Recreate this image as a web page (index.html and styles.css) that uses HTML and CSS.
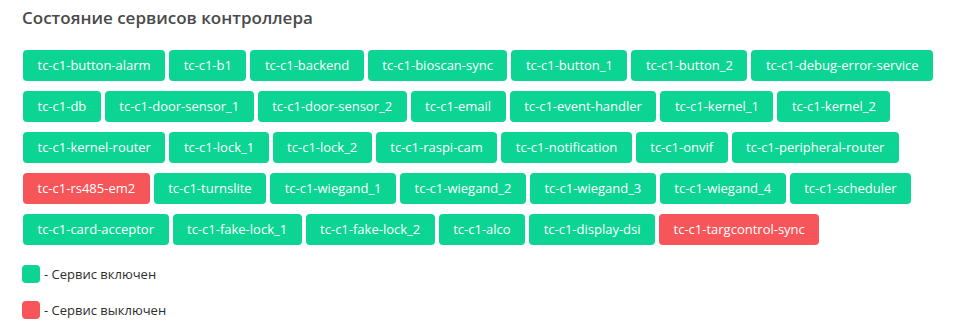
FILE: index.html
```html
<!DOCTYPE html>
<html lang="ru">
<head>
  <meta charset="UTF-8" />
  <meta name="viewport" content="width=device-width, initial-scale=1.0"/>
  <title>Состояние сервисов</title>
  <link rel="stylesheet" href="styles.css">
</head>
<body>

  <div class="panel">
    <h2>Состояние сервисов контроллера</h2>

    <div class="services">
      <span class="svc on">tc-c1-button-alarm</span>
      <span class="svc on">tc-c1-b1</span>
      <span class="svc on">tc-c1-backend</span>
      <span class="svc on">tc-c1-bioscan-sync</span>
      <span class="svc on">tc-c1-button_1</span>
      <span class="svc on">tc-c1-button_2</span>
      <span class="svc on">tc-c1-debug-error-service</span>
      <span class="svc on">tc-c1-db</span>
      <span class="svc on">tc-c1-door-sensor_1</span>
      <span class="svc on">tc-c1-door-sensor_2</span>
      <span class="svc on">tc-c1-email</span>
      <span class="svc on">tc-c1-event-handler</span>
      <span class="svc on">tc-c1-kernel_1</span>
      <span class="svc on">tc-c1-kernel_2</span>
      <span class="svc on">tc-c1-kernel-router</span>
      <span class="svc on">tc-c1-lock_1</span>
      <span class="svc on">tc-c1-lock_2</span>
      <span class="svc on">tc-c1-raspi-cam</span>
      <span class="svc on">tc-c1-notification</span>
      <span class="svc on">tc-c1-onvif</span>
      <span class="svc on">tc-c1-peripheral-router</span>
      <span class="svc off">tc-c1-rs485-em2</span>
      <span class="svc on">tc-c1-turnslite</span>
      <span class="svc on">tc-c1-wiegand_1</span>
      <span class="svc on">tc-c1-wiegand_2</span>
      <span class="svc on">tc-c1-wiegand_3</span>
      <span class="svc on">tc-c1-wiegand_4</span>
      <span class="svc on">tc-c1-scheduler</span>
      <span class="svc on">tc-c1-card-acceptor</span>
      <span class="svc on">tc-c1-fake-lock_1</span>
      <span class="svc on">tc-c1-fake-lock_2</span>
      <span class="svc on">tc-c1-alco</span>
      <span class="svc on">tc-c1-display-dsi</span>
      <span class="svc off">tc-c1-targcontrol-sync</span>
    </div>

    <!-- legend -->
    <div class="legend">
      <div class="legend-row"><span class="dot on"></span>- Сервис включен</div>
      <div class="legend-row"><span class="dot off"></span>- Сервис выключен</div>
    </div>
  </div>

</body>
</html>
```

FILE: styles.css
```css
body {
  margin: 0;
  background: #fff;
  font-family: "Open Sans", Arial, sans-serif;
  color: #333;
}

.panel {
  padding: 6px 22px 0 23px;
}

.panel h2 {
  margin: 0 0 0 -1px;
  font-size: 17px;
  font-weight: 600;
  line-height: 24px;
  color: #4a4a4a;
}

.services {
  display: flex;
  flex-wrap: wrap;
  gap: 10px 4px;
  margin-top: 20px;
  max-width: 915px;
}

.svc {
  display: inline-block;
  padding: 6px 14.5px;
  font-size: 13px;
  line-height: 19px;
  color: #fff;
  border-radius: 4px;
}

.on {
  background: #0cd493;
}

.off {
  background: #f65659;
}

.legend {
  margin-top: 20px;
}

.legend-row {
  display: flex;
  align-items: center;
  gap: 4px;
  font-size: 13px;
  height: 18px;
  margin-bottom: 18px;
  color: #2e2e2e;
}

.dot {
  width: 18px;
  height: 18px;
  border-radius: 4px;
  margin-left: -1px;
}
```
